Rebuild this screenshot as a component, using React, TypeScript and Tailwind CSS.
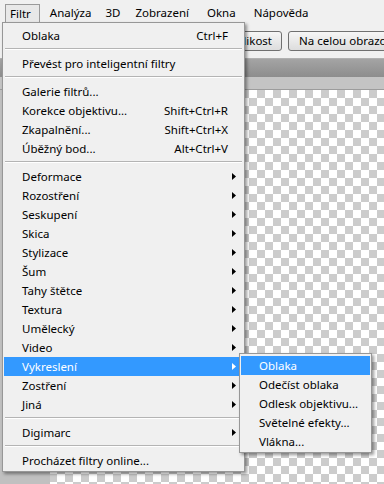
import React from 'react'

type Item =
  | { sep: true }
  | { label: string; shortcut?: string; sub?: boolean; active?: boolean }

const menuItems: Item[] = [
  { label: 'Oblaka', shortcut: 'Ctrl+F' },
  { sep: true },
  { label: 'Převést pro inteligentní filtry' },
  { sep: true },
  { label: 'Galerie filtrů...' },
  { label: 'Korekce objektivu...', shortcut: 'Shift+Ctrl+R' },
  { label: 'Zkapalnění...', shortcut: 'Shift+Ctrl+X' },
  { label: 'Úběžný bod...', shortcut: 'Alt+Ctrl+V' },
  { sep: true },
  { label: 'Deformace', sub: true },
  { label: 'Rozostření', sub: true },
  { label: 'Seskupení', sub: true },
  { label: 'Skica', sub: true },
  { label: 'Stylizace', sub: true },
  { label: 'Šum', sub: true },
  { label: 'Tahy štětce', sub: true },
  { label: 'Textura', sub: true },
  { label: 'Umělecký', sub: true },
  { label: 'Video', sub: true },
  { label: 'Vykreslení', sub: true, active: true },
  { label: 'Zostření', sub: true },
  { label: 'Jiná', sub: true },
  { sep: true },
  { label: 'Digimarc', sub: true },
  { sep: true },
  { label: 'Procházet filtry online...' },
]

const subItems = ['Oblaka', 'Odečíst oblaka', 'Odlesk objektivu...', 'Světelné efekty...', 'Vlákna...']

function Arrow({ white }: { white?: boolean }) {
  return (
    <svg width="4" height="7" viewBox="0 0 4 7">
      <path d="M0 0 L4 3.5 L0 7 Z" fill={white ? '#ffffff' : '#000000'} />
    </svg>
  )
}

function Separator() {
  return (
    <div className="h-[9px] pt-[3px] px-[1px]">
      <div className="h-px bg-[#b4b4b4]" />
      <div className="h-px bg-white" />
    </div>
  )
}

export default function App() {
  return (
    <div className="relative w-[384px] h-[484px] overflow-hidden flex flex-col bg-[#c0c0c0] text-[11.5px] text-black font-['Noto_Sans',sans-serif] leading-none">
      {/* Menu bar */}
      <div className="h-[22px] shrink-0 flex items-end bg-[#f0f0f0] pl-[5px]">
        <div className="h-[18px] flex items-center pl-[4px] pr-[8px] border border-b-0 border-[#9a9a9a] bg-[#e8e8e8]">
          Filtr
        </div>
        <div className="h-[18px] flex items-center ml-[10px]">Analýza</div>
        <div className="h-[18px] flex items-center ml-[14px]">3D</div>
        <div className="h-[18px] flex items-center ml-[15px]">Zobrazení</div>
        <div className="h-[18px] flex items-center ml-[18px]">Okna</div>
        <div className="h-[18px] flex items-center ml-[18px]">Nápověda</div>
      </div>

      {/* Options toolbar */}
      <div className="h-[36px] shrink-0 flex items-start gap-[6px] pt-[9px] pl-[150px] bg-[#f0f0f0] overflow-hidden whitespace-nowrap">
        <div className="w-[132px] shrink-0 h-[20px] flex items-center justify-end pr-[9px] rounded-[3px] border border-[#707070] bg-gradient-to-b from-[#f6f6f6] to-[#dddddd]">
          Tisková velikost
        </div>
        <div className="shrink-0 h-[20px] flex items-center px-[10px] rounded-[3px] border border-[#707070] bg-gradient-to-b from-[#f6f6f6] to-[#dddddd]">
          Na celou obrazovku
        </div>
      </div>

      {/* Document tab strip */}
      <div className="h-[19px] shrink-0 border-t border-[#b0b0b0] bg-gradient-to-b from-[#a4a4a4] to-[#8d8d8d]" />
      <div className="h-[13px] shrink-0 bg-[#c4c4c4] border-b border-[#9c9c9c]" />

      {/* Workspace */}
      <div className="flex-1 flex">
        <div className="w-[50px] shrink-0 bg-[#c0c0c0]" />
        <div className="flex-1 bg-[image:repeating-conic-gradient(#cccccc_0_25%,#ffffff_0_50%)] [background-size:16px_16px] [background-position:7px_0px]" />
      </div>

      {/* Filtr menu */}
      <div className="absolute left-[2px] top-[22px] w-[243px] border border-[#979797] bg-[#f0f0f0] pt-[3px] pb-[1px] px-[1px] shadow-[2px_2px_3px_rgba(0,0,0,0.4)] whitespace-nowrap">
        {menuItems.map((it, i) =>
          'sep' in it ? (
            <Separator key={i} />
          ) : (
            <div
              key={i}
              className={`h-[19px] flex items-center pl-[18px] pr-[3px] ${it.active ? 'bg-[#3399ff] text-white' : ''}`}
            >
              <span className="flex-1">{it.label}</span>
              {it.shortcut && <span>{it.shortcut}</span>}
              <span className="w-[12px] flex pl-[4px]">{it.sub && <Arrow white={it.active} />}</span>
            </div>
          )
        )}
      </div>

      {/* Vykreslení submenu */}
      <div className="absolute left-[239px] top-[353px] w-[133px] border border-[#979797] bg-[#f0f0f0] pt-[2px] pb-[1px] px-[1px] shadow-[2px_2px_3px_rgba(0,0,0,0.4)] whitespace-nowrap">
        {subItems.map((s, i) => (
          <div
            key={s}
            className={`h-[19px] flex items-center pl-[18px] ${i === 0 ? 'bg-[#3399ff] text-white' : ''}`}
          >
            {s}
          </div>
        ))}
      </div>
    </div>
  )
}
